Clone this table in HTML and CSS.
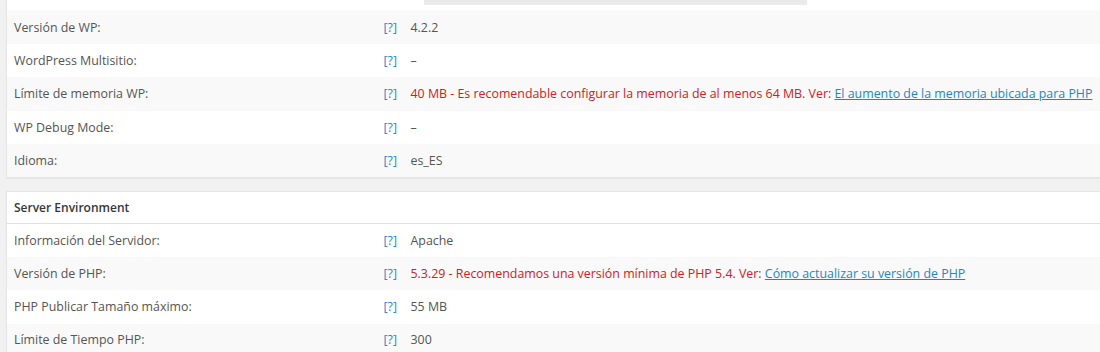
FILE: index.html
```html
<!DOCTYPE html>
<html lang="es">
<head>
    <meta charset="UTF-8">
    <title>Estado del sistema</title>
    <link rel="stylesheet" href="styles.css">
</head>
<body>
    <div class="wrap">
        <table class="status-table first">
            <colgroup>
                <col class="col-label">
                <col class="col-help">
                <col>
            </colgroup>
            <tbody>
                <tr class="partial">
                    <td class="label"></td>
                    <td class="help"><a href="#">[?]</a></td>
                    <td class="value"><span class="ok">&#10004; <code>/home/usuario/public_html/wp-content/uploads/wc-logs/</code></span></td>
                </tr>
                <tr class="alt">
                    <td class="label">Versión de WP:</td>
                    <td class="help"><a href="#">[?]</a></td>
                    <td class="value">4.2.2</td>
                </tr>
                <tr>
                    <td class="label">WordPress Multisitio:</td>
                    <td class="help"><a href="#">[?]</a></td>
                    <td class="value">–</td>
                </tr>
                <tr class="alt">
                    <td class="label">Límite de memoria WP:</td>
                    <td class="help"><a href="#">[?]</a></td>
                    <td class="value"><span class="error">40 MB - Es recomendable configurar la memoria de al menos 64 MB. Ver: </span><a class="link" href="#">El aumento de la memoria ubicada para PHP</a></td>
                </tr>
                <tr>
                    <td class="label">WP Debug Mode:</td>
                    <td class="help"><a href="#">[?]</a></td>
                    <td class="value">–</td>
                </tr>
                <tr class="alt">
                    <td class="label">Idioma:</td>
                    <td class="help"><a href="#">[?]</a></td>
                    <td class="value">es_ES</td>
                </tr>
            </tbody>
        </table>

        <table class="status-table">
            <colgroup>
                <col class="col-label">
                <col class="col-help">
                <col>
            </colgroup>
            <thead>
                <tr>
                    <th colspan="3">Server Environment</th>
                </tr>
            </thead>
            <tbody>
                <tr>
                    <td class="label">Información del Servidor:</td>
                    <td class="help"><a href="#">[?]</a></td>
                    <td class="value">Apache</td>
                </tr>
                <tr class="alt">
                    <td class="label">Versión de PHP:</td>
                    <td class="help"><a href="#">[?]</a></td>
                    <td class="value"><span class="error">5.3.29 - Recomendamos una versión mínima de PHP 5.4. Ver: </span><a class="link" href="#">Cómo actualizar su versión de PHP</a></td>
                </tr>
                <tr>
                    <td class="label">PHP Publicar Tamaño máximo:</td>
                    <td class="help"><a href="#">[?]</a></td>
                    <td class="value">55 MB</td>
                </tr>
                <tr class="alt">
                    <td class="label">Límite de Tiempo PHP:</td>
                    <td class="help"><a href="#">[?]</a></td>
                    <td class="value">300</td>
                </tr>
            </tbody>
        </table>
    </div>
</body>
</html>
```

FILE: styles.css
```css
body {
    margin: 0;
    background: #f1f1f1;
    font-family: "Open Sans", Arial, sans-serif;
    font-size: 12.4px;
    color: #555;
    overflow: hidden;
}
.wrap {
    padding-left: 6px;
    margin-right: -20px;
}
.status-table {
    width: 100%;
    table-layout: fixed;
    border-collapse: collapse;
    background: #fff;
    border: 1px solid #e5e5e5;
    box-shadow: 0 1px 1px rgba(0, 0, 0, 0.04);
    margin-bottom: 13px;
}
.status-table.first {
    margin-top: -23px;
    border-top: none;
}
.col-label {
    width: 370px;
}
.col-help {
    width: 27px;
}
.status-table th {
    text-align: left;
    font-size: 12px;
    font-weight: 600;
    color: #32373c;
    padding: 7px 7px;
    height: 17px;
    border-bottom: 1px solid #e1e1e1;
}
.status-table td {
    height: 33.4px;
    padding: 0 7px;
    box-sizing: border-box;
    vertical-align: middle;
    white-space: nowrap;
}
.status-table tr.alt td {
    background: #f9f9f9;
}
.help a {
    color: #2a8bc8;
    text-decoration: none;
}
.error {
    color: #cc2222;
}
.link {
    color: #1e87c2;
    text-decoration: underline;
}
.ok {
    color: #7ad03a;
}
code {
    background: #eaeaea;
    font-family: "Liberation Mono", Consolas, monospace;
    font-size: 11.8px;
    padding: 3px 4px;
}
```
